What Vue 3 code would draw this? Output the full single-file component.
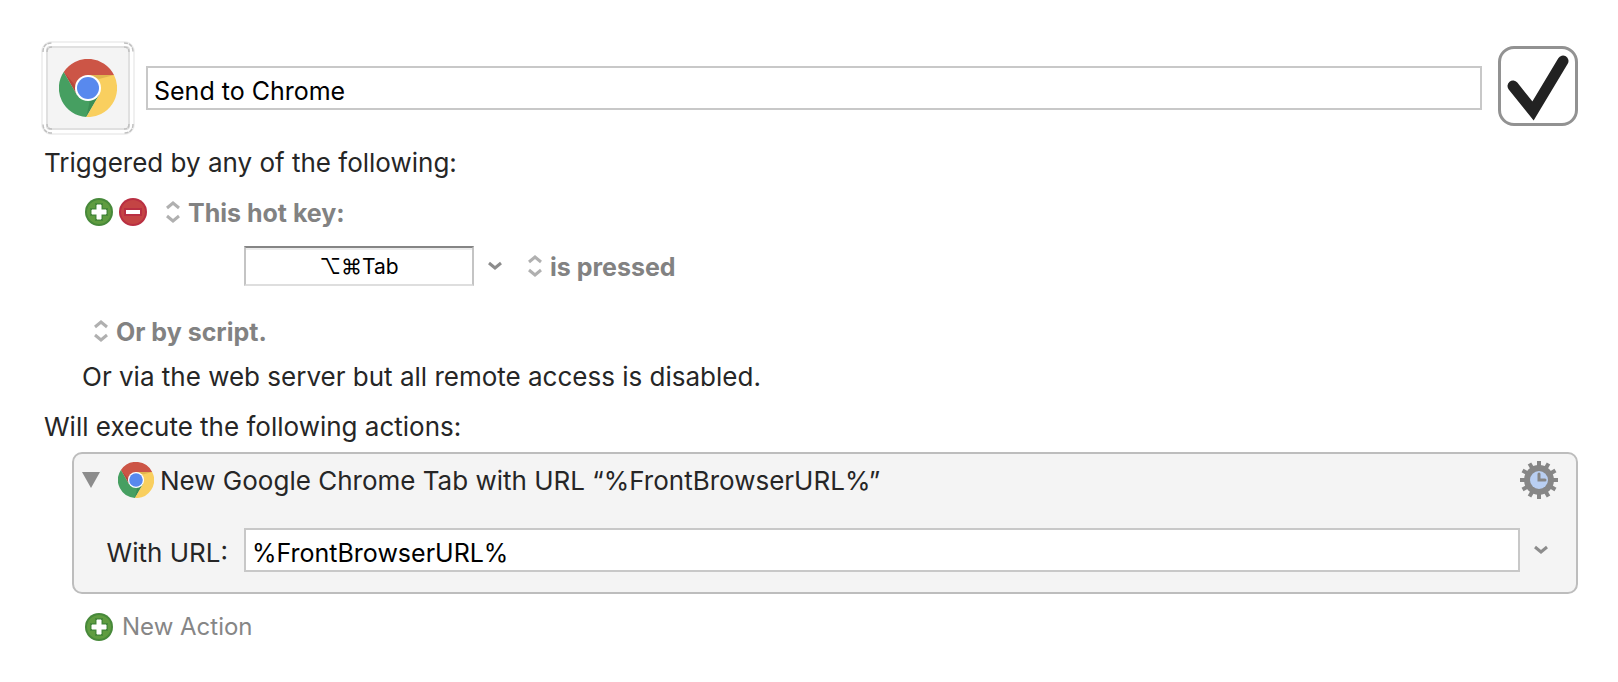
<script setup>
import { ref } from 'vue'

const name = ref('Send to Chrome')
const enabled = ref(true)
const hotKey = ref('⌥⌘Tab')
const url = ref('%FrontBrowserURL%')
const teeth = Array.from({ length: 12 }, (_, i) => i * 30)
const corners = [0, 90, 180, 270]
</script>

<template>
  <svg class="symbols" aria-hidden="true">
    <defs>
      <symbol id="chrome" viewBox="-29 -29 58 58">
        <path d="M0-13H26A29 29 0 0 0-24.3-16L-11.3 6.5Z" fill="#cc5546" />
        <path d="M-24.3-16A29 29 0 0 0-1.7 29L11.3 6.5H-11.3Z" fill="#469f61" />
        <path d="M-1.7 29A29 29 0 0 0 26-13H0L11.3 6.5Z" fill="#f9cf5f" />
        <path d="M0-13H26L11-9Z" fill="#9a6a20" opacity=".25" />
        <path d="M-24.3-16L-11.3 6.5L-13-3Z" fill="#7a2018" opacity=".25" />
        <path d="M-1.7 29L11.3 6.5L2 12Z" fill="#1c5a30" opacity=".25" />
        <circle r="13" fill="#fff" />
        <circle r="11" fill="#5889ee" />
      </symbol>
      <symbol id="plus" viewBox="0 0 28 28">
        <circle cx="14" cy="14" r="14" fill="#47893a" />
        <circle cx="14" cy="14" r="12" fill="#5f9c40" />
        <path d="M10 5H18V10H23V18H18V23H10V18H5V10H10Z" fill="#47893a" />
        <path d="M12 7H16V12H21V16H16V21H12V16H7V12H12Z" fill="#fff" stroke="#fff" />
      </symbol>
      <symbol id="minus" viewBox="0 0 28 28">
        <circle cx="14" cy="14" r="14" fill="#b92f42" />
        <circle cx="14" cy="14" r="12" fill="#c44444" />
        <path d="M5 10H23V18H5Z" fill="#b92f42" />
        <path d="M7 12H21V16H7Z" fill="#fff" />
      </symbol>
      <symbol id="updown" viewBox="0 0 14 22">
        <path d="M1 7L7 2L13 7M1 15L7 20L13 15" fill="none" stroke="#b0b0b0" stroke-width="3" />
      </symbol>
      <symbol id="down" viewBox="0 0 14 10">
        <path d="M1 2L7 7L13 2" fill="none" stroke="#8c8c8c" stroke-width="3" />
      </symbol>
    </defs>
  </svg>

  <main class="macro">
    <header class="head">
      <button class="plain well" aria-label="Macro icon">
        <svg width="94" height="94" viewBox="0 0 94 94">
          <rect x="1" y="1" width="92" height="92" rx="10" fill="#fff" stroke="#f0f0f0" stroke-width="2" />
          <rect x="6" y="6" width="82" height="82" rx="3" fill="#f4f4f4" stroke="#e0e0e0" stroke-width="2" />
          <g fill="none" stroke="#c0c0c0" stroke-width="1.5" stroke-dasharray="4 1">
            <g v-for="a in corners" :key="a" :transform="`rotate(${a} 47 47)`">
              <path d="M2 11Q2 2 11 2" />
              <path d="M6 11Q6 6 11 6" />
            </g>
          </g>
          <use href="#chrome" x="18" y="18" width="58" height="58" />
        </svg>
      </button>
      <input v-model="name" class="field grow" type="text" aria-label="Macro name" />
      <label class="enable">
        <input v-model="enabled" type="checkbox" aria-label="Macro enabled" />
        <svg v-if="enabled" width="80" height="80" viewBox="0 0 80 80" aria-hidden="true">
          <path d="M15 40L35 65L65 15" fill="none" stroke="#222" stroke-width="11" stroke-linecap="round" stroke-miterlimit="6" />
        </svg>
      </label>
    </header>

    <p class="line triggered">Triggered by any of the following:</p>

    <div class="row trigger">
      <button class="plain" aria-label="Add trigger"><svg width="28" height="28"><use href="#plus" /></svg></button>
      <button class="plain remove" aria-label="Remove trigger"><svg width="28" height="28"><use href="#minus" /></svg></button>
      <label class="popup">
        <svg width="14" height="22" aria-hidden="true"><use href="#updown" /></svg>
        <select aria-label="Trigger type"><option>This hot key:</option></select>
      </label>
    </div>

    <div class="row keys">
      <input v-model="hotKey" class="hotkey" type="text" aria-label="Hot key" />
      <button class="plain keymenu" aria-label="Hot key options"><svg width="14" height="10"><use href="#down" /></svg></button>
      <label class="popup">
        <svg width="14" height="22" aria-hidden="true"><use href="#updown" /></svg>
        <select aria-label="Hot key condition"><option>is pressed</option></select>
      </label>
    </div>

    <div class="row script">
      <label class="popup">
        <svg width="14" height="22" aria-hidden="true"><use href="#updown" /></svg>
        <select aria-label="Script trigger"><option>Or by script.</option></select>
      </label>
    </div>

    <p class="line web">Or via the web server but all remote access is disabled.</p>
    <p class="line execute">Will execute the following actions:</p>

    <section class="action">
      <div class="title">
        <button class="plain" aria-label="Collapse action">
          <svg width="18" height="16"><path d="M0 0H18L9 16Z" fill="#8c8c8c" /></svg>
        </button>
        <svg class="logo" width="36" height="36" aria-hidden="true"><use href="#chrome" /></svg>
        <h2>New Google Chrome Tab with URL “%FrontBrowserURL%”</h2>
        <button class="plain" aria-label="Action options">
          <svg width="38" height="38" viewBox="-19 -19 38 38">
            <rect v-for="a in teeth" :key="a" x="-2" y="-19" width="4" height="8" fill="#868686" :transform="`rotate(${a})`" />
            <circle r="15" fill="#868686" />
            <circle r="9" fill="#b9cff2" />
            <path d="M0-6V0H6" fill="none" stroke="#868686" stroke-width="3" stroke-linecap="round" />
          </svg>
        </button>
      </div>
      <div class="param">
        <label for="url">With URL:</label>
        <input id="url" v-model="url" class="field grow" type="text" />
        <button class="plain" aria-label="Insert token"><svg width="14" height="10"><use href="#down" /></svg></button>
      </div>
    </section>

    <button class="plain new"><svg width="28" height="28" aria-hidden="true"><use href="#plus" /></svg>New Action</button>
  </main>
</template>

<style>
body {
  background: #fff;
}
</style>

<style scoped>
.symbols {
  position: absolute;
  width: 0;
  height: 0;
}
.macro {
  display: flex;
  flex-direction: column;
  padding: 41px 40px 39px 41px;
  font-family: Inter, "Liberation Sans", "DejaVu Sans", sans-serif;
  font-size: 26px;
  line-height: 32px;
  color: #262626;
}
svg {
  display: block;
  flex: none;
}
.plain {
  flex: none;
  padding: 0;
  border: 0;
  background: none;
  font: inherit;
}
.head {
  display: flex;
  align-items: center;
}
.field {
  box-sizing: border-box;
  height: 44px;
  padding: 6px 6px 0;
  border: 2px solid #c8c8c8;
  background: #fff;
  font: inherit;
  font-size: 25px;
  color: #000;
}
.grow {
  flex: 1;
  min-width: 0;
}
.well {
  margin-right: 11px;
}
.enable {
  display: grid;
  flex: none;
  margin: 0 0 4px 16px;
}
.enable > * {
  grid-area: 1 / 1;
}
.enable input {
  appearance: none;
  box-sizing: border-box;
  width: 80px;
  height: 80px;
  margin: 0;
  border: 3px solid #929292;
  border-radius: 16px;
  background: #fff;
}
.enable svg {
  z-index: 1;
  pointer-events: none;
}
.line {
  margin: 0;
}
.triggered {
  margin: 12px 0 0 3px;
}
.row {
  display: flex;
  align-items: center;
}
.trigger {
  margin: 17px 0 0 44px;
}
.remove {
  margin: 0 19px 0 6px;
}
.popup {
  display: flex;
  align-items: center;
  gap: 8px;
}
.popup select {
  appearance: none;
  height: 32px;
  padding: 2px 0 0;
  border: 0;
  background: none;
  font: inherit;
  font-size: 25px;
  line-height: 30px;
  font-weight: 700;
  color: #828282;
}
.keys {
  margin: 18px 0 0 203px;
}
.hotkey {
  box-sizing: border-box;
  width: 230px;
  height: 40px;
  padding: 0;
  border: 2px solid;
  border-color: #858585 #c4c4c4 #dedede;
  background: #fff;
  box-shadow: inset 0 2px #ececec;
  font: inherit;
  font-size: 21px;
  text-align: center;
  color: #000;
}
.keymenu {
  margin: 0 26px 0 14px;
}
.script {
  margin: 29px 0 0 53px;
}
.web {
  margin: 14px 0 0 41px;
}
.execute {
  margin: 18px 0 0 3px;
}
.action {
  margin: 9px 0 0 31px;
  padding: 0 0 20px;
  border: 2px solid #bdbdbd;
  border-radius: 10px;
  background: #f4f4f4;
}
.title {
  display: flex;
  align-items: center;
  height: 52px;
  padding: 0 18px 0 8px;
}
.title h2 {
  flex: 1;
  margin: 0;
  padding-top: 2px;
  font-size: 26px;
  font-weight: 400;
}
.logo {
  margin: 0 6px 0 18px;
}
.param {
  display: flex;
  align-items: center;
  margin-top: 22px;
  padding: 0 28px 0 0;
}
.param label {
  box-sizing: border-box;
  width: 170px;
  padding: 6px 16px 0 0;
  text-align: right;
}
.param button {
  margin-left: 14px;
}
.new {
  display: flex;
  align-items: center;
  align-self: flex-start;
  gap: 9px;
  margin: 17px 0 0 44px;
  font-size: 24px;
  color: #868686;
}
</style>
